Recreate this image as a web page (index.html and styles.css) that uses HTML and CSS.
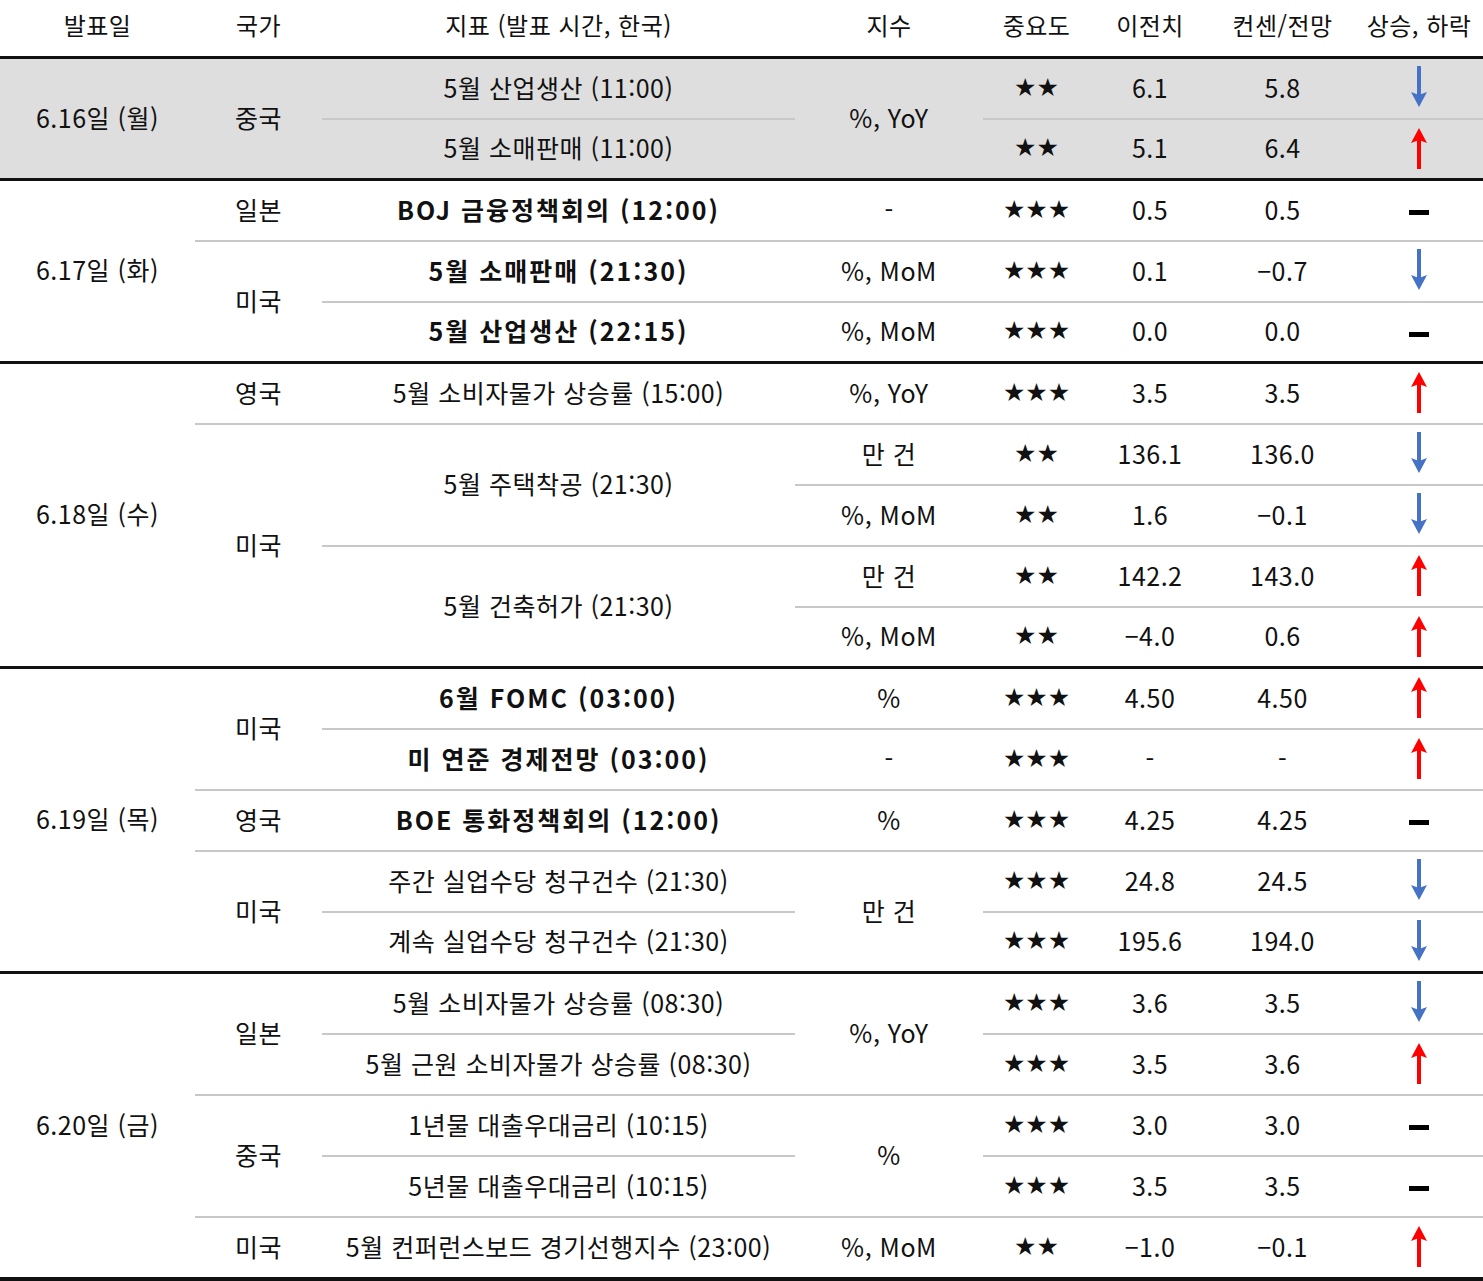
FILE: index.html
```html
<!DOCTYPE html>
<html lang="ko">
<head>
<meta charset="utf-8">
<title>주간 경제지표 일정</title>
<link rel="stylesheet" href="styles.css">
</head>
<body>
<svg class="defs" width="0" height="0" aria-hidden="true">
  <defs>
    <symbol id="down" viewBox="0 0 20 42">
      <rect x="8" y="0" width="4" height="30" fill="#4472c4"/>
      <polygon points="2,26 10,29 18,26 10,41" fill="#4472c4"/>
    </symbol>
    <symbol id="up" viewBox="0 0 20 42">
      <rect x="8" y="12" width="4" height="30" fill="#ff0000"/>
      <polygon points="2,16 10,13 18,16 10,1" fill="#ff0000"/>
    </symbol>
  </defs>
</svg>
<table class="cal">
  <colgroup>
    <col class="c-date"><col class="c-ctry"><col class="c-ind"><col class="c-unit"><col class="c-imp"><col class="c-prev"><col class="c-cons"><col class="c-dir">
  </colgroup>
  <thead>
    <tr class="head">
      <th>발표일</th><th>국가</th><th>지표 (발표 시간, 한국)</th><th>지수</th><th>중요도</th><th>이전치</th><th>컨센/전망</th><th>상승, 하락</th>
    </tr>
  </thead>
  <tbody class="shade">
    <tr>
      <td rowspan="2" class="g">6.16일 (월)</td>
      <td rowspan="2" class="g">중국</td>
      <td class="b">5월 산업생산 (11:00)</td>
      <td rowspan="2" class="g">%, YoY</td>
      <td class="b star">★★</td><td class="b">6.1</td><td class="b">5.8</td>
      <td class="b"><svg class="arr"><use href="#down"/></svg></td>
    </tr>
    <tr>
      <td class="g">5월 소매판매 (11:00)</td>
      <td class="g star">★★</td><td class="g">5.1</td><td class="g">6.4</td>
      <td class="g"><svg class="arr"><use href="#up"/></svg></td>
    </tr>
  </tbody>
  <tbody>
    <tr>
      <td rowspan="3" class="g">6.17일 (화)</td>
      <td class="b">일본</td>
      <td class="b bold">BOJ 금융정책회의 (12:00)</td>
      <td class="b">-</td>
      <td class="b star">★★★</td><td class="b">0.5</td><td class="b">0.5</td>
      <td class="b"><span class="flat"></span></td>
    </tr>
    <tr>
      <td rowspan="2" class="g">미국</td>
      <td class="b bold">5월 소매판매 (21:30)</td>
      <td class="b">%, MoM</td>
      <td class="b star">★★★</td><td class="b">0.1</td><td class="b">−0.7</td>
      <td class="b"><svg class="arr"><use href="#down"/></svg></td>
    </tr>
    <tr>
      <td class="g bold">5월 산업생산 (22:15)</td>
      <td class="g">%, MoM</td>
      <td class="g star">★★★</td><td class="g">0.0</td><td class="g">0.0</td>
      <td class="g"><span class="flat"></span></td>
    </tr>
  </tbody>
  <tbody>
    <tr>
      <td rowspan="5" class="g">6.18일 (수)</td>
      <td class="b">영국</td>
      <td class="b">5월 소비자물가 상승률 (15:00)</td>
      <td class="b">%, YoY</td>
      <td class="b star">★★★</td><td class="b">3.5</td><td class="b">3.5</td>
      <td class="b"><svg class="arr"><use href="#up"/></svg></td>
    </tr>
    <tr>
      <td rowspan="4" class="g">미국</td>
      <td rowspan="2" class="b">5월 주택착공 (21:30)</td>
      <td class="b">만 건</td>
      <td class="b star">★★</td><td class="b">136.1</td><td class="b">136.0</td>
      <td class="b"><svg class="arr"><use href="#down"/></svg></td>
    </tr>
    <tr>
      <td class="b">%, MoM</td>
      <td class="b star">★★</td><td class="b">1.6</td><td class="b">−0.1</td>
      <td class="b"><svg class="arr"><use href="#down"/></svg></td>
    </tr>
    <tr>
      <td rowspan="2" class="g">5월 건축허가 (21:30)</td>
      <td class="b">만 건</td>
      <td class="b star">★★</td><td class="b">142.2</td><td class="b">143.0</td>
      <td class="b"><svg class="arr"><use href="#up"/></svg></td>
    </tr>
    <tr>
      <td class="g">%, MoM</td>
      <td class="g star">★★</td><td class="g">−4.0</td><td class="g">0.6</td>
      <td class="g"><svg class="arr"><use href="#up"/></svg></td>
    </tr>
  </tbody>
  <tbody>
    <tr>
      <td rowspan="5" class="g">6.19일 (목)</td>
      <td rowspan="2" class="b">미국</td>
      <td class="b bold">6월 FOMC (03:00)</td>
      <td class="b">%</td>
      <td class="b star">★★★</td><td class="b">4.50</td><td class="b">4.50</td>
      <td class="b"><svg class="arr"><use href="#up"/></svg></td>
    </tr>
    <tr>
      <td class="b bold">미 연준 경제전망 (03:00)</td>
      <td class="b">-</td>
      <td class="b star">★★★</td><td class="b">-</td><td class="b">-</td>
      <td class="b"><svg class="arr"><use href="#up"/></svg></td>
    </tr>
    <tr>
      <td class="b">영국</td>
      <td class="b bold">BOE 통화정책회의 (12:00)</td>
      <td class="b">%</td>
      <td class="b star">★★★</td><td class="b">4.25</td><td class="b">4.25</td>
      <td class="b"><span class="flat"></span></td>
    </tr>
    <tr>
      <td rowspan="2" class="g">미국</td>
      <td class="b">주간 실업수당 청구건수 (21:30)</td>
      <td rowspan="2" class="g">만 건</td>
      <td class="b star">★★★</td><td class="b">24.8</td><td class="b">24.5</td>
      <td class="b"><svg class="arr"><use href="#down"/></svg></td>
    </tr>
    <tr>
      <td class="g">계속 실업수당 청구건수 (21:30)</td>
      <td class="g star">★★★</td><td class="g">195.6</td><td class="g">194.0</td>
      <td class="g"><svg class="arr"><use href="#down"/></svg></td>
    </tr>
  </tbody>
  <tbody>
    <tr>
      <td rowspan="5" class="end">6.20일 (금)</td>
      <td rowspan="2" class="b">일본</td>
      <td class="b">5월 소비자물가 상승률 (08:30)</td>
      <td rowspan="2" class="b">%, YoY</td>
      <td class="b star">★★★</td><td class="b">3.6</td><td class="b">3.5</td>
      <td class="b"><svg class="arr"><use href="#down"/></svg></td>
    </tr>
    <tr>
      <td class="b">5월 근원 소비자물가 상승률 (08:30)</td>
      <td class="b star">★★★</td><td class="b">3.5</td><td class="b">3.6</td>
      <td class="b"><svg class="arr"><use href="#up"/></svg></td>
    </tr>
    <tr>
      <td rowspan="2" class="b">중국</td>
      <td class="b">1년물 대출우대금리 (10:15)</td>
      <td rowspan="2" class="b">%</td>
      <td class="b star">★★★</td><td class="b">3.0</td><td class="b">3.0</td>
      <td class="b"><span class="flat"></span></td>
    </tr>
    <tr>
      <td class="b">5년물 대출우대금리 (10:15)</td>
      <td class="b star">★★★</td><td class="b">3.5</td><td class="b">3.5</td>
      <td class="b"><span class="flat"></span></td>
    </tr>
    <tr class="last">
      <td class="end">미국</td>
      <td class="end">5월 컨퍼런스보드 경기선행지수 (23:00)</td>
      <td class="end">%, MoM</td>
      <td class="end star">★★</td><td class="end">−1.0</td><td class="end">−0.1</td>
      <td class="end"><svg class="arr"><use href="#up"/></svg></td>
    </tr>
  </tbody>
</table>
</body>
</html>
```

FILE: styles.css
```css
html, body {
  margin: 0;
  padding: 0;
  background: #ffffff;
}

body {
  font-family: "Noto Sans CJK KR", "Noto Sans", sans-serif;
  font-size: 25px;
  letter-spacing: 0.5px;
  color: #111111;
  width: 1483px;
}

.defs {
  position: absolute;
  width: 0;
  height: 0;
  overflow: hidden;
}

.cal {
  width: 1483px;
  table-layout: fixed;
  border-collapse: separate;
  border-spacing: 0;
}

.c-date { width: 195px; }
.c-ctry { width: 127px; }
.c-ind  { width: 473px; }
.c-unit { width: 188px; }
.c-imp  { width: 107px; }
.c-prev { width: 120px; }
.c-cons { width: 145px; }
.c-dir  { width: 128px; }

.cal th,
.cal td {
  padding: 0 0 3px 0;
  text-align: center;
  vertical-align: middle;
  white-space: nowrap;
  line-height: 1;
  font-weight: 400;
}

.head {
  height: 59px;
}

.head th {
  font-size: 24px;
  border-bottom: 3px solid #111111;
  padding-bottom: 7px;
}

.cal tbody tr {
  height: 61px;
}

.cal tbody tr.last {
  height: 64px;
}

.shade td {
  background: #dedede;
}

.b {
  border-bottom: 2px solid #c8c8c8;
}

.g {
  border-bottom: 3px solid #111111;
}

.end {
  border-bottom: 5px solid #111111;
}

.bold {
  font-weight: 700 !important;
  letter-spacing: 2px;
}

.star {
  font-family: "DejaVu Sans", sans-serif;
  font-size: 25px;
  letter-spacing: 0;
}

.arr {
  display: inline-block;
  width: 20px;
  height: 42px;
  vertical-align: middle;
}

.flat {
  display: inline-block;
  width: 20px;
  height: 5px;
  background: #000000;
  vertical-align: middle;
}
```
